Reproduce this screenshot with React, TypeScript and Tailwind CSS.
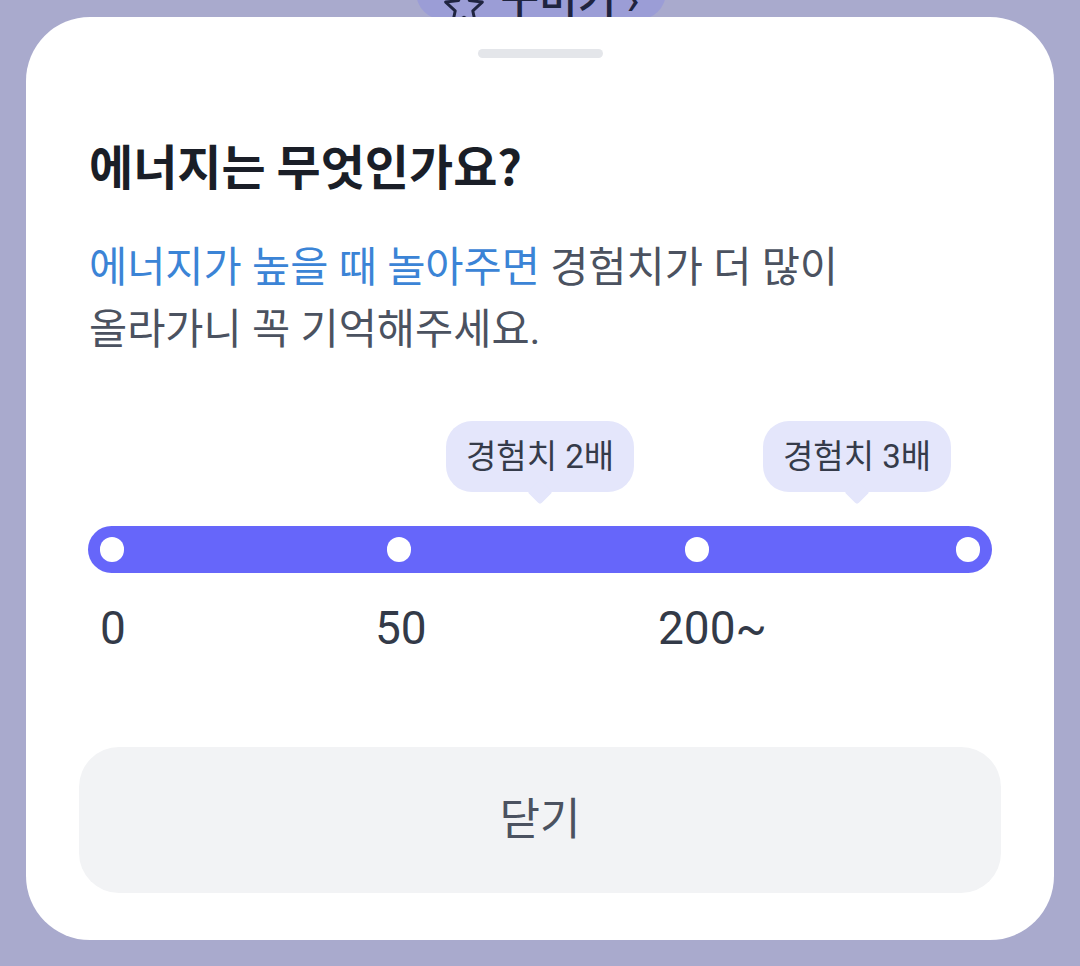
import React from "react";

const font = { fontFamily: 'Roboto, "Noto Sans CJK KR", "Noto Sans", sans-serif' };
const cjk = { fontFamily: '"Noto Sans CJK KR", "Noto Sans", sans-serif' };

export default function App() {
  return (
    <div className="relative w-[1080px] h-[966px] overflow-hidden bg-[#a9aacd]" style={font}>
      <div className="absolute left-[416px] top-[-36px] w-[250px] h-[56px] rounded-full bg-[#9b9dd6] flex items-center justify-center gap-[14px] text-[#1f2440]">
        <svg width="44" height="44" viewBox="0 0 24 24" fill="none" stroke="#1f2440" strokeWidth="1.6" strokeLinejoin="round" className="relative top-[15px]">
          <path d="M12 2l3 6.5 7 .8-5.2 4.8 1.5 7L12 17.6 5.7 21.1l1.5-7L2 9.3l7-.8z" />
        </svg>
        <span className="relative top-[8px] text-[42px] font-medium leading-[44px]">꾸미기 ›</span>
      </div>
      <div className="relative mx-[26px] mt-[17px] h-[923px] rounded-[64px] bg-white flex flex-col">
        <div className="mx-auto mt-[32px] w-[125px] h-[9px] rounded-full bg-[#e4e6ea]" />
        <div className="px-[63px]">
          <h1 className="mt-[76px] text-[48px] leading-[60px] font-bold text-[#1a1e27]" style={cjk}>에너지는 무엇인가요?</h1>
          <p className="mt-[43px] text-[41.5px] leading-[62px] text-[#4b5260]">
            <span className="text-[#3b84d6]">에너지가 높을 때 놀아주면</span> 경험치가 더 많이
            <br />
            올라가니 꼭 기억해주세요.
          </p>
          <div className="mt-[60px] flex h-[105px] items-start">
            <Bubble className="ml-[357px]">경험치 2배</Bubble>
            <Bubble className="ml-[129px]">경험치 3배</Bubble>
          </div>
          <div className="relative h-[47px] w-[904px] rounded-full bg-[#6666fa] ml-[-1px]">
            {[24, 311, 609, 880].map((x) => (
              <div key={x} className="absolute top-[11px] w-[24px] h-[25px] rounded-full bg-white" style={{ left: x - 12 }} />
            ))}
          </div>
          <div className="mt-[27px] flex text-[46px] leading-[56px] text-[#333a48]">
            <div className="ml-[11px] w-[275px]">0</div>
            <div className="w-[283px]">50</div>
            <div>200~</div>
          </div>
        </div>
        <button className="mx-[53px] mt-[91px] h-[146px] rounded-[40px] bg-[#f2f3f5] text-[44px] text-[#4b5260]">닫기</button>
      </div>
    </div>
  );
}

function Bubble({ children, className }: { children: React.ReactNode; className?: string }) {
  return (
    <div className={"relative w-[188px] h-[71px] rounded-[26px] bg-[#e4e6fb] flex items-center justify-center text-[33px] text-[#353b4a] " + (className ?? "")}>
      {children}
      <div className="absolute left-1/2 bottom-[-9px] w-[18px] h-[18px] -translate-x-1/2 rotate-45 bg-[#e4e6fb] rounded-[3px]" />
    </div>
  );
}
